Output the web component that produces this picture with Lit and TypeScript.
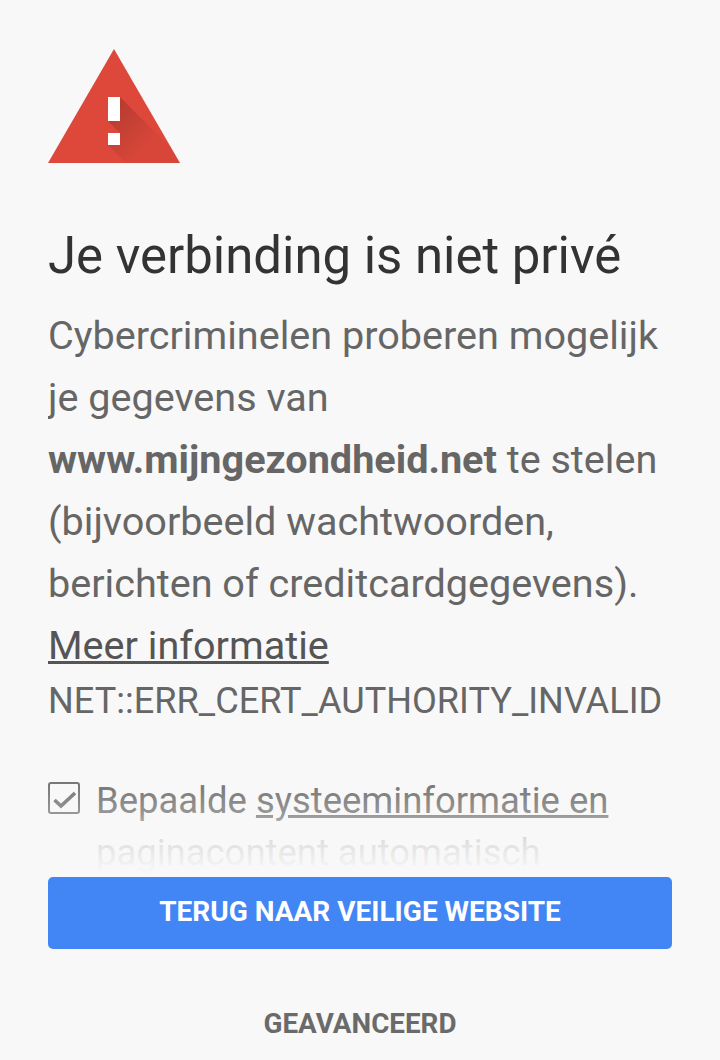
import { LitElement, html, css, svg } from "lit";
import { customElement } from "lit/decorators.js";

const warn = svg`
<svg class="icon" width="132" height="116" viewBox="48 48 132 116" aria-hidden="true">
  <defs>
    <linearGradient id="sh" gradientUnits="userSpaceOnUse" x1="112" y1="112" x2="146" y2="146">
      <stop offset="0" stop-color="#000" stop-opacity=".17"/>
      <stop offset="1" stop-color="#000" stop-opacity=".03"/>
    </linearGradient>
    <clipPath id="tri"><polygon points="114,49 180,163 48,163"/></clipPath>
  </defs>
  <polygon points="114,49 180,163 48,163" fill="#de483b"/>
  <g clip-path="url(#tri)">
    <polygon points="120,97 186,163 186,170 133,170 108,145 120,145 120,133 108,121" fill="url(#sh)"/>
  </g>
  <rect x="108" y="97" width="12" height="24" fill="#fff"/>
  <rect x="108" y="133" width="12" height="12" fill="#fff"/>
</svg>`;

@customElement("app-root")
export class AppRoot extends LitElement {
  static styles = css`
    :host {
      display: block;
      height: 1060px;
      overflow: hidden;
      background: #f8f8f8;
      font-family: Roboto, "Liberation Sans", sans-serif;
      color: #666666;
    }
    .page {
      display: flex;
      flex-direction: column;
      height: 1060px;
      padding: 0 48px;
      box-sizing: border-box;
    }
    .scroll {
      position: relative;
      flex: 1;
      min-height: 0;
      overflow: hidden;
      padding-top: 48px;
    }
    .icon {
      display: block;
    }
    h1 {
      margin: 61px 0 0;
      font-size: 50.9px;
      line-height: 62px;
      font-weight: 400;
      color: #333333;
    }
    .body {
      margin: 18px 0 0;
      font-size: 39.6px;
      line-height: 62px;
    }
    strong {
      font-weight: 700;
    }
    a {
      color: inherit;
    }
    .link {
      display: block;
      color: #555555;
    }
    .code {
      margin: 0;
      font-size: 36.15px;
      line-height: 48px;
      white-space: nowrap;
    }
    .opt {
      display: flex;
      gap: 16px;
      margin-top: 50px;
      font-size: 36.45px;
      line-height: 52px;
      color: #787878;
    }
    .opt a {
      color: inherit;
    }
    .box {
      flex: none;
      width: 32px;
      height: 32px;
      margin-top: 7px;
      box-sizing: border-box;
      border: 2px solid #787878;
      border-radius: 3px;
    }
    .box svg {
      display: block;
    }
    .fade {
      position: absolute;
      left: 0;
      right: 0;
      bottom: 0;
      height: 100px;
      background: linear-gradient(
        rgba(248, 248, 248, 0) 8%,
        rgba(248, 248, 248, 0.25) 38%,
        rgba(248, 248, 248, 0.8) 63%,
        rgba(248, 248, 248, 0.97) 90%,
        #f8f8f8
      );
    }
    .primary {
      flex: none;
      display: block;
      height: 72px;
      width: 100%;
      border: 0;
      border-radius: 5px;
      padding: 0 0 4px;
      background: #4285f4;
      color: #fff;
      font: 700 28px Roboto, sans-serif;
    }
    .secondary {
      flex: none;
      display: flex;
      align-items: center;
      justify-content: center;
      padding-top: 38px;
      box-sizing: border-box;
      height: 111px;
      font-size: 27.8px;
      font-weight: 700;
      color: #6a6a6a;
    }
  `;

  render() {
    return html`<div class="page">
      <div class="scroll">
        ${warn}
        <h1>Je verbinding is niet privé</h1>
        <p class="body">
          Cybercriminelen proberen mogelijk je gegevens van
          <strong>www.mijngezondheid.net</strong> te stelen (bijvoorbeeld
          wachtwoorden, berichten of creditcardgegevens).
          <a class="link" href="#">Meer informatie</a>
        </p>
        <p class="code">NET::ERR_CERT_AUTHORITY_INVALID</p>
        <div class="opt">
          <span class="box">
            <svg width="28" height="28" viewBox="0 0 28 28" fill="none" stroke="#787878" stroke-width="3.6">
              <path d="M4.5 16l6.5 6L25 9"/>
            </svg>
          </span>
          <span>Bepaalde <a href="#">systeeminformatie en</a> paginacontent automatisch</span>
        </div>
        <div class="fade"></div>
      </div>
      <button class="primary">TERUG NAAR VEILIGE WEBSITE</button>
      <div class="secondary">GEAVANCEERD</div>
    </div>`;
  }
}
